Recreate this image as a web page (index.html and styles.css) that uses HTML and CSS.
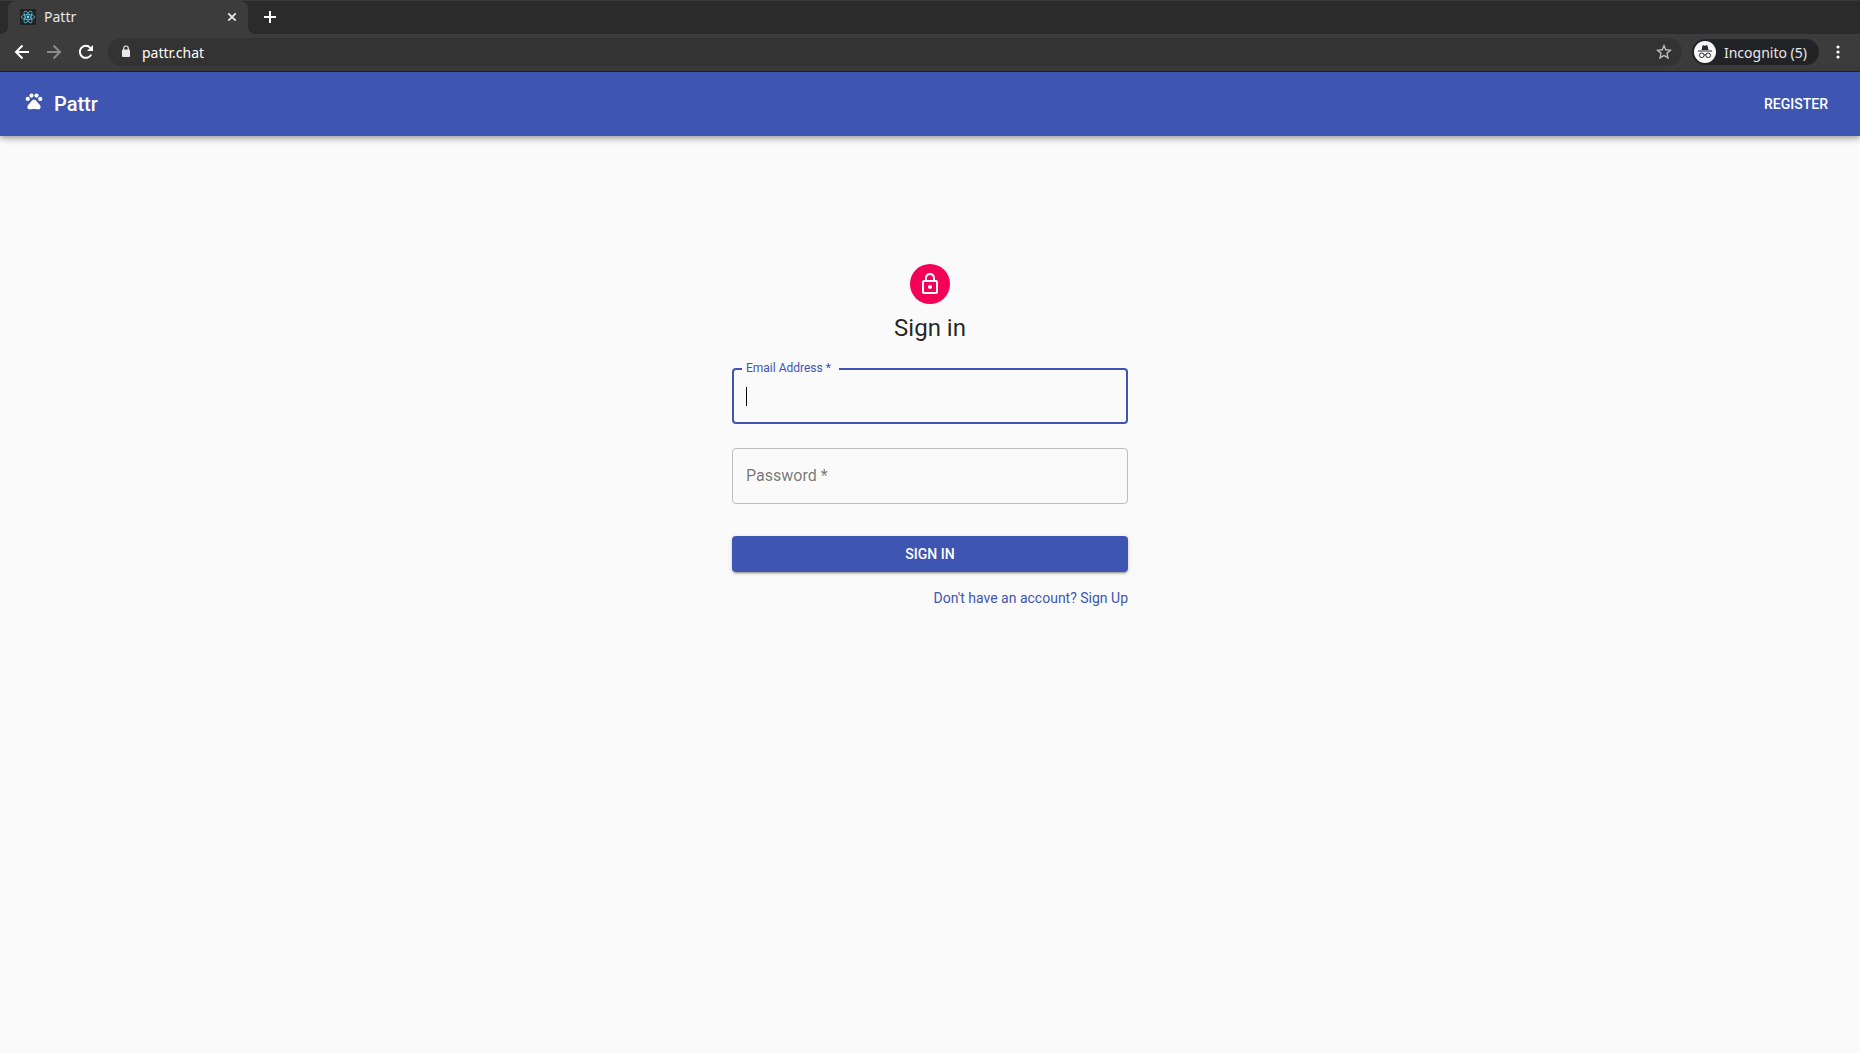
FILE: index.html
```
<!DOCTYPE html>
<html lang="en">
<head>
<meta charset="utf-8">
<meta name="viewport" content="width=device-width, initial-scale=1">
<title>Pattr</title>
<link rel="stylesheet" href="styles.css">
</head>
<body>
<div class="browser">
  <div class="tabstrip">
    <div class="tab">
      <svg class="favicon" width="16" height="16" viewBox="0 0 16 16" aria-hidden="true">
        <rect width="16" height="16" rx="1" fill="#222"/>
        <g fill="none" stroke="#53c1de" stroke-width=".8">
          <ellipse cx="8" cy="8" rx="6.6" ry="2.6"/>
          <ellipse cx="8" cy="8" rx="6.6" ry="2.6" transform="rotate(60 8 8)"/>
          <ellipse cx="8" cy="8" rx="6.6" ry="2.6" transform="rotate(120 8 8)"/>
        </g>
        <circle cx="8" cy="8" r="1.4" fill="#61dafb"/>
      </svg>
      <span class="tab-title">Pattr</span>
      <button class="icon-button" type="button" aria-label="Close tab">
        <svg width="16" height="16" viewBox="0 0 16 16"><path d="M4.3 4.3l7.4 7.4M11.7 4.3l-7.4 7.4" fill="none" stroke="#e8e8e8" stroke-width="1.8"/></svg>
      </button>
    </div>
    <button class="icon-button" type="button" aria-label="New tab">
      <svg width="16" height="16" viewBox="0 0 16 16"><path d="M8 2v12M2 8h12" fill="none" stroke="#fff" stroke-width="2"/></svg>
    </button>
  </div>
  <div class="toolbar">
    <div class="nav">
      <button class="icon-button" type="button" aria-label="Back">
        <svg width="16" height="16" viewBox="0 0 16 16"><path d="M15 8H2.5M8.5 1.5L2 8l6.500 6.500" fill="none" stroke="#fff" stroke-width="2"/></svg>
      </button>
      <button class="icon-button" type="button" aria-label="Forward">
        <svg width="16" height="16" viewBox="0 0 16 16"><path d="M1 8h12.500M7.500 1.500L14 8l-6.500 6.500" fill="none" stroke="#8b8b8b" stroke-width="2"/></svg>
      </button>
      <button class="icon-button" type="button" aria-label="Reload">
        <svg width="16" height="16" viewBox="0 0 16 16"><path d="M13.200 10.600A6 6 0 1 1 12.300 3.800" fill="none" stroke="#fff" stroke-width="2"/><path d="M15 1v6H9z" fill="#fff"/></svg>
      </button>
    </div>
    <div class="omnibox">
      <svg width="12" height="16" viewBox="0 0 12 16" aria-hidden="true"><rect x="2" y="5.500" width="8" height="7.500" rx="1" fill="#e8e8e8"/><path d="M3.700 6V4.300a2.300 2.300 0 0 1 4.600 0V6" fill="none" stroke="#e8e8e8" stroke-width="1.200"/></svg>
      <input class="address" type="text" aria-label="Address" value="pattr.chat">
      <button class="icon-button" type="button" aria-label="Bookmark this page">
        <svg width="16" height="16" viewBox="2 2 20 20"><path d="M22 9.240l-7.190-.62L12 2 9.190 8.630 2 9.240l5.460 4.730L5.820 21 12 17.270 18.180 21l-1.630-7.030L22 9.240zM12 15.400l-3.760 2.270 1-4.280-3.320-2.880 4.380-.38L12 6.100l1.710 4.040 4.380.38-3.320 2.880 1 4.280L12 15.400z" fill="#c4c4c4"/></svg>
      </button>
    </div>
    <button class="profile" type="button">
      <svg width="22" height="22" viewBox="0 0 22 22" aria-hidden="true">
        <circle cx="11" cy="11" r="11" fill="#f8f8f9"/>
        <path d="M7.500 9l1-4.200q.2-.7.900-.5l1.600.5 1.600-.5q.7-.2.900.5l1 4.200z" fill="#292a2d"/>
        <path d="M4 10h14" stroke="#292a2d" stroke-width="1"/>
        <g fill="none" stroke="#292a2d" stroke-width="1"><circle cx="7.800" cy="14.300" r="2.300"/><circle cx="14.200" cy="14.300" r="2.300"/><path d="M10 14q1-.8 2 0"/></g>
      </svg>
      <span>Incognito (5)</span>
    </button>
    <button class="icon-button" type="button" aria-label="Menu">
      <svg width="16" height="16" viewBox="0 0 16 16"><g fill="#fff"><circle cx="8" cy="3" r="1.600"/><circle cx="8" cy="8" r="1.600"/><circle cx="8" cy="13" r="1.600"/></g></svg>
    </button>
  </div>
</div>

<header class="appbar">
  <a class="brand" href="#"><svg class="paw" width="20" height="20" viewBox="0 0 24 24" aria-hidden="true"><g fill="#fff"><circle cx="4.500" cy="9.500" r="2.500"/><circle cx="9" cy="5.500" r="2.500"/><circle cx="15" cy="5.500" r="2.500"/><circle cx="19.500" cy="9.500" r="2.500"/><path d="M17.340 14.860c-.87-1.020-1.600-1.890-2.480-2.910-.46-.54-1.050-1.080-1.750-1.320-.11-.04-.22-.07-.33-.09-.25-.04-.52-.04-.78-.04s-.53 0-.79.05c-.11.02-.22.05-.33.09-.7.24-1.280.78-1.750 1.320-.87 1.020-1.600 1.890-2.480 2.910-1.310 1.310-2.920 2.760-2.620 4.790.29 1.020 1.020 2.030 2.330 2.320.73.15 3.060-.44 5.540-.44h.18c2.480 0 4.810.58 5.540.44 1.310-.29 2.040-1.310 2.330-2.320.31-2.040-1.300-3.490-2.610-4.800z"/></g></svg>Pattr</a>
  <a class="register" href="#register">REGISTER</a>
</header>

<main class="signin">
  <div class="avatar">
    <svg width="24" height="24" viewBox="0 0 24 24" aria-hidden="true"><path fill="#fff" d="M12 17c1.100 0 2-.9 2-2s-.9-2-2-2-2 .9-2 2 .9 2 2 2zm6-9h-1V6c0-2.760-2.240-5-5-5S7 3.240 7 6v2H6c-1.100 0-2 .9-2 2v10c0 1.100.9 2 2 2h12c1.100 0 2-.9 2-2V10c0-1.100-.9-2-2-2zM8.900 6c0-1.710 1.390-3.100 3.100-3.100s3.100 1.390 3.100 3.100v2H8.900V6zM18 20H6V10h12v10z"/></svg>
  </div>
  <h1 class="title">Sign in</h1>
  <form class="form">
    <div class="field field-active">
      <input class="field-input" id="email" type="email" required>
      <label class="field-label" for="email">Email Address *</label>
      <span class="caret"></span>
    </div>
    <div class="field">
      <input class="field-input" id="password" type="password" required>
      <label class="field-label" for="password">Password *</label>
    </div>
    <button class="submit" type="submit">SIGN IN</button>
    <a class="signup" href="#signup">Don't have an account? Sign Up</a>
  </form>
</main>
</body>
</html>
```
FILE: styles.css
```
* {
  box-sizing: border-box;
}

body {
  margin: 0;
  min-height: 100vh;
  background: #fafafa;
  color: rgba(0, 0, 0, 0.87);
  font-family: Roboto, sans-serif;
}

button {
  border: 0;
  padding: 0;
  font: inherit;
  cursor: pointer;
}

a {
  text-decoration: none;
}

svg {
  flex: none;
}

/* Browser frame */
.browser {
  background: #3c3c3c;
  border-bottom: 1px solid #232323;
  font-family: "Noto Sans", sans-serif;
  font-size: 14px;
  color: #e8e8e8;
}

.tabstrip {
  display: flex;
  align-items: center;
  gap: 14px;
  height: 34px;
  padding: 0 8px 2px;
  background: #2b2b2b;
  border-top: 1px solid #393939;
}

.tab {
  position: relative;
  display: flex;
  align-items: center;
  align-self: flex-start;
  width: 240px;
  height: 33px;
  padding: 0 8px 2px 12px;
  background: #3c3c3c;
  border-radius: 8px 8px 0 0;
}

.tab::before,
.tab::after {
  content: "";
  position: absolute;
  bottom: 0;
  width: 8px;
  height: 8px;
}

.tab::before {
  right: 100%;
  background: radial-gradient(circle at 0 0, #2b2b2b 8px, #3c3c3c 8px);
}

.tab::after {
  left: 100%;
  background: radial-gradient(circle at 100% 0, #2b2b2b 8px, #3c3c3c 8px);
}

.tab-title {
  flex: 1;
  padding-left: 8px;
}

.icon-button {
  display: flex;
  background: none;
}

.toolbar {
  display: flex;
  align-items: center;
  height: 37px;
  padding: 0 14px 1px;
}

.nav {
  display: flex;
  gap: 16px;
  padding-right: 14px;
}

.omnibox {
  display: flex;
  flex: 1;
  align-items: center;
  gap: 10px;
  height: 28px;
  padding: 0 10px 0 12px;
  background: #333;
  border-radius: 14px;
}

.address {
  flex: 1;
  min-width: 0;
  border: 0;
  padding: 0;
  outline: 0;
  background: none;
  color: #fff;
  font: inherit;
}

.profile {
  display: flex;
  align-items: center;
  gap: 8px;
  height: 26px;
  margin: 0 11px 0 10px;
  padding: 0 12px 0 2px;
  border-radius: 13px;
  background: #222326;
  color: #e8e8e8;
}

/* Application bar */
.appbar {
  position: relative;
  display: flex;
  align-items: center;
  justify-content: space-between;
  height: 64px;
  padding: 0 32px 0 24px;
  background: #3e55b1;
  box-shadow: 0 2px 4px -1px rgba(0, 0, 0, 0.2), 0 4px 5px 0 rgba(0, 0, 0, 0.14), 0 1px 10px 0 rgba(0, 0, 0, 0.12);
}

.brand {
  color: #fff;
  font-size: 20px;
  font-weight: 500;
  line-height: 32px;
}

.paw {
  margin-right: 10px;
}

.register {
  color: #fff;
  font-size: 14px;
  font-weight: 500;
  line-height: 24px;
}

/* Sign-in form */
.signin {
  display: flex;
  flex-direction: column;
  align-items: center;
  width: 100%;
  max-width: 444px;
  margin: 0 auto;
  padding: 128px 24px 24px;
}

.avatar {
  display: flex;
  align-items: center;
  justify-content: center;
  width: 40px;
  height: 40px;
  margin-bottom: 8px;
  border-radius: 50%;
  background: #f50057;
}

.title {
  margin: 0;
  font-size: 24px;
  font-weight: 400;
  line-height: 32px;
}

.form {
  display: flex;
  flex-direction: column;
  gap: 24px;
  width: 100%;
  margin-top: 24px;
}

.field {
  position: relative;
}

.field-input {
  display: block;
  width: 100%;
  height: 56px;
  padding: 0 14px;
  border: 1px solid #bdbdbd;
  border-radius: 4px;
  outline: 0;
  background: none;
  font: inherit;
  font-size: 16px;
}

.field-label {
  position: absolute;
  top: 18px;
  left: 14px;
  color: rgba(0, 0, 0, 0.54);
  font-size: 16px;
  line-height: 20px;
  pointer-events: none;
}

.field-active .field-input {
  border: 2px solid #3e55b1;
}

.field-active .field-label {
  top: -8px;
  left: 10px;
  padding: 0 8px 0 4px;
  background: #fafafa;
  color: #3e55b1;
  font-size: 12px;
  line-height: 16px;
}

.caret {
  position: absolute;
  top: 19px;
  left: 14px;
  width: 1px;
  height: 19px;
  background: #000;
}

.submit {
  height: 36px;
  margin-top: 8px;
  border-radius: 4px;
  background: #3e55b1;
  box-shadow: 0 3px 1px -2px rgba(0, 0, 0, 0.2), 0 2px 2px 0 rgba(0, 0, 0, 0.14), 0 1px 5px 0 rgba(0, 0, 0, 0.12);
  color: #fff;
  font-size: 14px;
  font-weight: 500;
}

.signup {
  align-self: flex-end;
  margin-top: -8px;
  color: #3e55b1;
  font-size: 14px;
  line-height: 20px;
}
```
